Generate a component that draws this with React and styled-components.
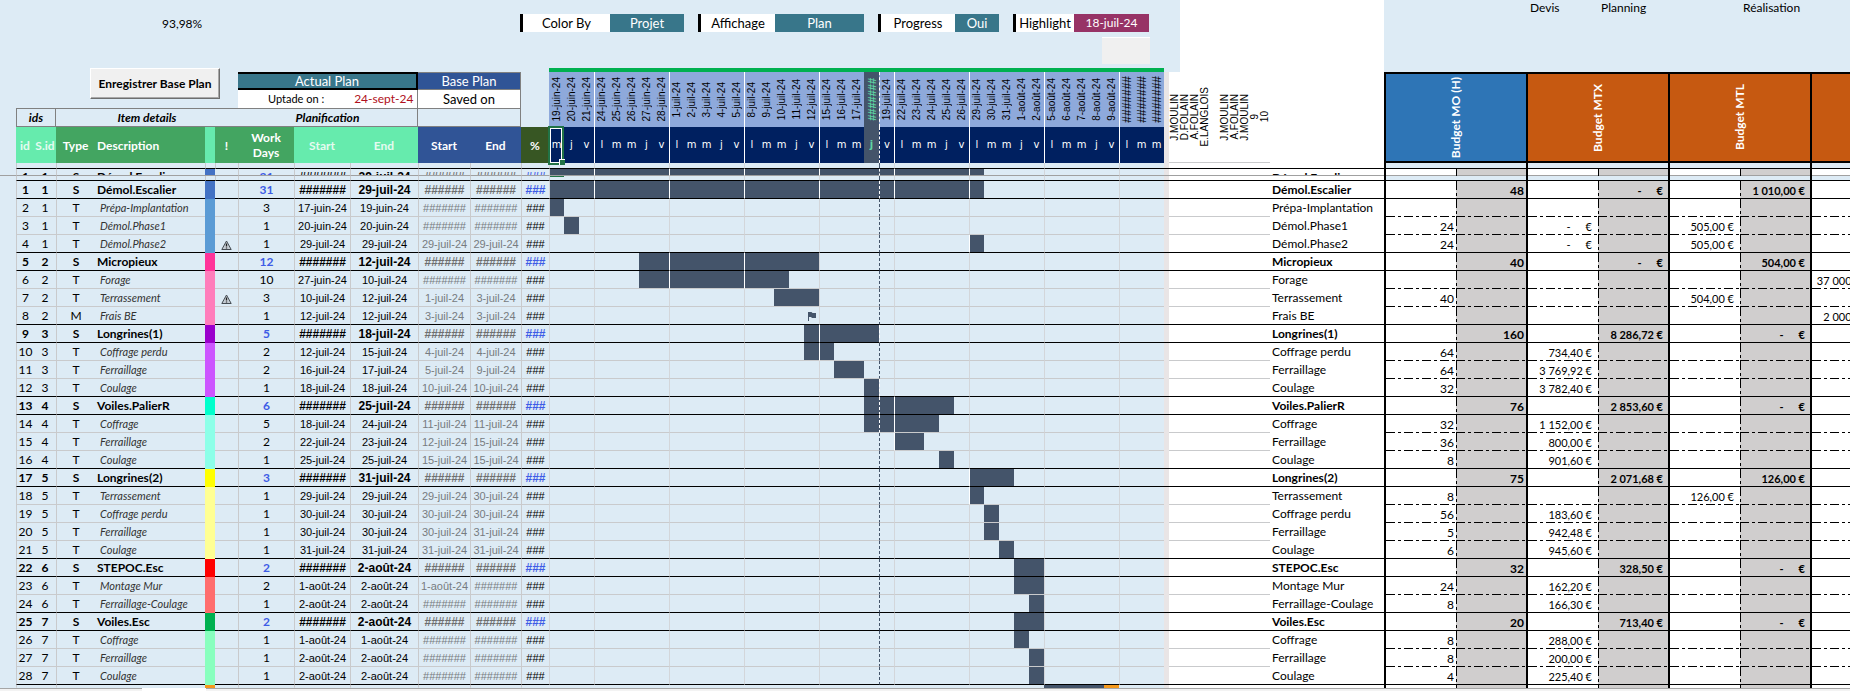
import React from "react";
import styled, { createGlobalStyle, css } from "styled-components";

const c = {
  sheet: "#ddebf5",
  grid: "#c9cacc",
  teal: "#38768a",
  mint: "#66ebad",
  green: "#43a561",
  blue: "#305496",
  bar: "#44546a",
  navy: "#002060",
  date: "#8ea9db",
  grey: "#d0cece",
  accent: "#3d5ce6",
  orange: "#f5991c",
};

const GlobalStyle = createGlobalStyle`
  * { box-sizing: border-box; }
  body {
    margin: 0;
    background: #fff;
    color: #000;
    font: 12px/16px Lato, "Liberation Sans", sans-serif;
    overflow-x: hidden;
  }
`;

const Page = styled.main`
  overflow: hidden;
`;

/* ---------- top band ---------- */
const TopBand = styled.header`
  display: flex;
  height: 68px;
`;
const ControlPane = styled.div`
  flex: none;
  width: 1180px;
  padding-top: 14px;
  background: ${c.sheet};
`;
const BlankPane = styled.div`
  flex: none;
  width: 204px;
`;
const PhasePane = styled.div`
  flex: 1;
  display: flex;
  padding-left: 146px;
  background: ${c.sheet};
  font-size: 12px;
  line-height: 15px;
  white-space: nowrap;
`;
const Phase = styled.span`
  flex: none;
  width: ${(p) => p.$w}px;
`;
const Controls = styled.div`
  display: flex;
  gap: 14px;
  height: 18px;
`;
const Ratio = styled.output`
  flex: none;
  width: 506px;
  padding-left: 162px;
  line-height: 20px;
`;
const Field = styled.label`
  display: flex;
  flex: none;
  border-left: 3px solid #000;
`;
const FieldName = styled.span`
  width: ${(p) => p.$w}px;
  background: #fff;
  text-align: center;
  line-height: 19px;
  font-size: 13px;
`;
const fieldValue = css`
  width: ${(p) => p.$w}px;
  height: 18px;
  margin: 0;
  padding: 0;
  border: 0;
  border-radius: 0;
  color: #fff;
  font: 13px/18px Lato, "Liberation Sans", sans-serif;
  text-align: center;
  text-align-last: center;
`;
const FieldSelect = styled.select`
  ${fieldValue}
  appearance: none;
  background: ${c.teal};
`;
const FieldInput = styled.input`
  ${fieldValue}
  background: #973366;
  font-size: 12px;
`;
const BlankButton = styled.button`
  display: block;
  width: 48px;
  height: 27px;
  margin: 5px 30px 0 auto;
  padding: 0;
  border: 0;
  border-top: 1px solid #fff;
  background: #f0f0f0;
`;

/* ---------- sheet ---------- */
const Sheet = styled.table`
  width: 100%;
  table-layout: fixed;
  border-collapse: separate;
  border-spacing: 0;
  td, th {
    padding: 0;
    white-space: nowrap;
  }
`;
const Row = styled.tr`
  height: ${(p) => p.$h}px;
`;
const Blank = styled.td`
  background: ${(p) => p.$bg || c.sheet};
`;
const GreenLine = styled.td`
  background: #00b050;
`;
const ButtonCell = styled.td`
  background: ${c.sheet};
  padding-left: 74px !important;
  vertical-align: top;
`;
const SaveButton = styled.button`
  display: block;
  width: 130px;
  height: 31px;
  padding: 0;
  border: 1px solid;
  border-color: #fff #6e6e6e #6e6e6e #fff;
  box-shadow: inset -1px -1px 0 #a8a8a8;
  background: #f0f0f0;
  color: #000;
  font: bold 12px/16px Lato, "Liberation Sans", sans-serif;
`;
const PlanTitle = styled.th`
  background: ${(p) => p.$bg};
  border: ${(p) => (p.$heavy ? "2px solid #000" : "1px solid #808080")};
  border-left: 0;
  color: #fff;
  font-weight: 400;
  line-height: 14px;
  font-size: 13px;
`;
const PlanInfo = styled.td`
  background: #fff;
  border-right: 1px solid #808080;
  text-align: center;
  font-size: 13px;
`;
const Update = styled.div`
  display: flex;
  align-items: center;
  padding-left: 30px;
  gap: 30px;
  font-size: 11px;
`;
const UpdateDate = styled.span`
  color: #b01020;
  font-size: 12px;
`;
const SectionTitle = styled.th`
  background: ${c.sheet};
  border: solid #808080;
  border-width: 1px 1px 1px ${(p) => (p.$first ? 1 : 0)}px;
  ${(p) => p.$open && "border-right-width: 0;"}
  font: italic bold 12px/16px Lato, "Liberation Sans", sans-serif;
`;
const ColumnHead = styled.th`
  background: ${(p) => p.$bg};
  color: ${(p) => p.$color || "#fff"};
  text-align: ${(p) => (p.$left ? "left" : "center")};
  padding-left: ${(p) => (p.$left ? 2 : 0)}px !important;
  font: bold 12px/15px Lato, "Liberation Sans", sans-serif;
  white-space: normal !important;
`;
const weekEdge = css`
  border-left: 1px solid ${(p) => (p.$onBar ? "#fff" : "#d3d6da")};
`;
const todayEdge = css`
  border-left: 1px dashed ${(p) => (p.$onBar ? "#fff" : c.bar)};
`;
const DateHead = styled.th`
  background: ${(p) => (p.$today ? c.bar : c.date)};
  color: ${(p) => (p.$today ? "#5fd6a4" : "#000")};
  ${(p) => p.$edge === "week" && weekEdge}
  ${(p) => p.$edge === "today" && todayEdge}
`;
const Upright = styled.span`
  display: block;
  margin: 0 auto;
  writing-mode: vertical-rl;
  transform: rotate(180deg);
  text-align: center;
  font: ${(p) => p.$font || '10px/10px "Liberation Sans", sans-serif'};
`;
const WeekdayHead = styled.th`
  position: relative;
  background: ${(p) => (p.$today ? c.bar : c.navy)};
  color: ${(p) => (p.$today ? "#5fd6a4" : "#fff")};
  ${(p) => p.$edge === "week" && weekEdge}
  ${(p) => p.$edge === "today" && todayEdge}
  font: ${(p) => (p.$today ? "bold " : "")}10px/12px "DejaVu Sans", sans-serif;
`;
const Selection = styled.span`
  position: absolute;
  z-index: 1;
  inset: -1px 0 -2px -1px;
  border: 2px solid #217346;
  box-shadow: inset 0 0 0 1px #fff;
  &::after {
    content: "";
    position: absolute;
    right: -3px;
    bottom: -2px;
    width: 5px;
    height: 5px;
    background: #217346;
    border: solid #fff;
    border-width: 1px 0 0 1px;
  }
`;
const SelectionEdge = styled.span`
  position: absolute;
  top: 0;
  left: 0;
  width: 17px;
  height: 1px;
  background: #217346;
`;
const ResourceHead = styled.th`
  background: #fff;
  border-bottom: 1px solid ${c.grid};
`;
const BudgetHead = styled.th`
  background: ${(p) => p.$bg};
  border: 2px solid #000;
  border-right: 0;
  color: #fff;
`;

const lineColor = (p) =>
  ({ black: "#000", freeze: "#a0a0a0", none: "transparent" })[p.$line] || c.grid;
const Cell = styled.td`
  background: ${(p) => p.$bg || c.sheet};
  border-bottom: 1px solid ${(p) => (p.$solid ? p.$bg : lineColor(p))};
  border-left: ${(p) => (p.$edge ? `1px solid ${c.grid}` : 0)};
  color: ${(p) => p.$color || "#000"};
  text-align: ${(p) => (p.$left ? "left" : "center")};
  ${(p) => p.$left && `padding-left: ${p.$left}px !important;`}
  font-family: Lato, "Liberation Sans", sans-serif;
  font-size: ${(p) => p.$size || 12}px;
  font-weight: ${(p) => (p.$bold ? 700 : 400)};
  font-style: ${(p) => (p.$italic ? "italic" : "normal")};
  line-height: 16px;
`;
const DateCell = styled(Cell)`
  font-family: "Liberation Sans", sans-serif;
`;
const DayCell = styled.td`
  position: relative;
  background: ${(p) => p.$fill || c.sheet};
  border-bottom: 1px solid ${lineColor};
  ${(p) => p.$edge === "week" && weekEdge}
  ${(p) => p.$edge === "today" && todayEdge}
`;
const Strip = styled.td`
  background: #e9e5e6;
  border-bottom: 1px solid ${(p) => (p.$line ? lineColor(p) : "#e9e5e6")};
`;
const ResourceCell = styled.td`
  background: #fff;
  border-bottom: 1px solid ${lineColor};
`;
const NameCell = styled.td`
  background: #fff;
  padding: 1px 0 0 2px !important;
  border-bottom: 1px solid ${(p) => (p.$line === "grey" ? "#fff" : lineColor(p))};
  font-weight: ${(p) => (p.$bold ? 700 : 400)};
  font-size: 12px;
  line-height: 16px;
`;
const dashDot = (dir) =>
  `repeating-linear-gradient(${dir}, #000 0 9px, transparent 9px 12px, #000 12px 15px, transparent 15px 18px)`;
const BudgetCell = styled.td`
  text-align: right;
  padding: 1px ${(p) => (p.$hours ? 2 : p.$planned ? 5 : 6)}px 0 0 !important;
  font-weight: ${(p) => (p.$bold ? 700 : 400)};
  font-size: ${(p) => (p.$hours ? 12 : 11)}px;
  line-height: 16px;
  background-color: ${(p) => (p.$plain ? c.sheet : p.$planned ? c.grey : "#fff")};
  border-left: ${(p) => (p.$planned ? 0 : "2px solid #000")};
  background-image: ${(p) =>
    [
      p.$planned && !p.$plain ? dashDot("to bottom") : "linear-gradient(transparent, transparent)",
      p.$line === "grey" ? dashDot("to right") : `linear-gradient(${lineColor(p)}, ${lineColor(p)})`,
    ].join(", ")};
  background-size: 1px 100%, 100% 1px;
  background-position: left top, left bottom;
  background-repeat: no-repeat;
`;
const Zero = styled.span`
  padding-right: 15px;
`;
const Clip = styled.div`
  height: ${(p) => p.$h}px;
  overflow: hidden;
`;

/* ---------- foot ---------- */
const SheetTabs = styled.footer`
  display: flex;
  height: 3px;
  border-top: 1px solid #a6a6a6;
  background: #f3f3f3;
`;
const ActiveTab = styled.span`
  width: 64px;
  margin-left: 142px;
  margin-top: -1px;
  background: #fff;
`;

/* ---------- data ---------- */
const HASH = "#######";
const days = [
  "19-juin-24", "20-juin-24", "21-juin-24",
  "24-juin-24", "25-juin-24", "26-juin-24", "27-juin-24", "28-juin-24",
  "1-juil-24", "2-juil-24", "3-juil-24", "4-juil-24", "5-juil-24",
  "8-juil-24", "9-juil-24", "10-juil-24", "11-juil-24", "12-juil-24",
  "15-juil-24", "16-juil-24", "17-juil-24", HASH, "19-juil-24",
  "22-juil-24", "23-juil-24", "24-juil-24", "25-juil-24", "26-juil-24",
  "29-juil-24", "30-juil-24", "31-juil-24", "1-août-24", "2-août-24",
  "5-août-24", "6-août-24", "7-août-24", "8-août-24", "9-août-24",
  HASH, HASH, HASH,
];
const TODAY = 21;
const weekday = (i) => "lmmjv"[(i + 2) % 5];
const edgeOf = (i) => (i === TODAY + 1 ? "today" : i === 0 || (i + 2) % 5 === 0 ? "week" : null);

const resources = ["J.MOULIN", "D.FOLAIN", "A.FOLAIN", "E.LANGLOIS", "", "J.MOULIN", "A.FOLAIN", "J.MOULIN", "9", "10"];

const groups = {
  1: ["#4472c4", "#5b9bd5"],
  2: ["#ff3399", "#ff7dbb"],
  3: ["#9a00cc", "#cc55ff"],
  4: ["#00ffcc", "#8cffe8"],
  5: ["#ffff00", "#ffff93"],
  6: ["#ff0000", "#ff6d6d"],
  7: ["#00b050", "#88ffbe"],
};
const Z = "-";
// id, group, type, name, work days, start, end, base start, base end, bar from, bar to, MO, MTX, MTL, next, warning
const tasks = [
  [1, 1, "S", "Démol.Escalier", 31, HASH, "29-juil-24", "######", "######", 0, 28, "48", Z, "1 010,00 €"],
  [2, 1, "T", "Prépa-Implantation", 3, "17-juin-24", "19-juin-24", HASH, HASH, 0, 0],
  [3, 1, "T", "Démol.Phase1", 1, "20-juin-24", "20-juin-24", HASH, HASH, 1, 1, "24", Z, "505,00 €"],
  [4, 1, "T", "Démol.Phase2", 1, "29-juil-24", "29-juil-24", "29-juil-24", "29-juil-24", 28, 28, "24", Z, "505,00 €", "", true],
  [5, 2, "S", "Micropieux", 12, HASH, "12-juil-24", "######", "######", 6, 17, "40", Z, "504,00 €"],
  [6, 2, "T", "Forage", 10, "27-juin-24", "10-juil-24", HASH, HASH, 6, 15, "", "", "", "37 000,00 €"],
  [7, 2, "T", "Terrassement", 3, "10-juil-24", "12-juil-24", "1-juil-24", "3-juil-24", 15, 17, "40", "", "504,00 €", "", true],
  [8, 2, "M", "Frais BE", 1, "12-juil-24", "12-juil-24", "3-juil-24", "3-juil-24", 17, 17, "", "", "", "2 000,00 €"],
  [9, 3, "S", "Longrines(1)", 5, HASH, "18-juil-24", "######", "######", 17, 21, "160", "8 286,72 €", Z],
  [10, 3, "T", "Coffrage perdu", 2, "12-juil-24", "15-juil-24", "4-juil-24", "4-juil-24", 17, 18, "64", "734,40 €"],
  [11, 3, "T", "Ferraillage", 2, "16-juil-24", "17-juil-24", "5-juil-24", "9-juil-24", 19, 20, "64", "3 769,92 €"],
  [12, 3, "T", "Coulage", 1, "18-juil-24", "18-juil-24", "10-juil-24", "10-juil-24", 21, 21, "32", "3 782,40 €"],
  [13, 4, "S", "Voiles.PalierR", 6, HASH, "25-juil-24", "######", "######", 21, 26, "76", "2 853,60 €", Z],
  [14, 4, "T", "Coffrage", 5, "18-juil-24", "24-juil-24", "11-juil-24", "11-juil-24", 21, 25, "32", "1 152,00 €"],
  [15, 4, "T", "Ferraillage", 2, "22-juil-24", "23-juil-24", "12-juil-24", "15-juil-24", 23, 24, "36", "800,00 €"],
  [16, 4, "T", "Coulage", 1, "25-juil-24", "25-juil-24", "15-juil-24", "15-juil-24", 26, 26, "8", "901,60 €"],
  [17, 5, "S", "Longrines(2)", 3, HASH, "31-juil-24", "######", "######", 28, 30, "75", "2 071,68 €", "126,00 €"],
  [18, 5, "T", "Terrassement", 1, "29-juil-24", "29-juil-24", "29-juil-24", "30-juil-24", 28, 28, "8", "", "126,00 €"],
  [19, 5, "T", "Coffrage perdu", 1, "30-juil-24", "30-juil-24", "30-juil-24", "30-juil-24", 29, 29, "56", "183,60 €"],
  [20, 5, "T", "Ferraillage", 1, "30-juil-24", "30-juil-24", "30-juil-24", "31-juil-24", 29, 29, "5", "942,48 €"],
  [21, 5, "T", "Coulage", 1, "31-juil-24", "31-juil-24", "31-juil-24", "31-juil-24", 30, 30, "6", "945,60 €"],
  [22, 6, "S", "STEPOC.Esc", 2, HASH, "2-août-24", "######", "######", 31, 32, "32", "328,50 €", Z],
  [23, 6, "T", "Montage Mur", 2, "1-août-24", "2-août-24", "1-août-24", HASH, 31, 32, "24", "162,20 €"],
  [24, 6, "T", "Ferraillage-Coulage", 1, "2-août-24", "2-août-24", HASH, HASH, 32, 32, "8", "166,30 €"],
  [25, 7, "S", "Voiles.Esc", 2, HASH, "2-août-24", "######", "######", 31, 32, "20", "713,40 €", Z],
  [26, 7, "T", "Coffrage", 1, "1-août-24", "1-août-24", HASH, HASH, 31, 31, "8", "288,00 €"],
  [27, 7, "T", "Ferraillage", 1, "2-août-24", "2-août-24", HASH, HASH, 32, 32, "8", "200,00 €"],
  [28, 7, "T", "Coulage", 1, "2-août-24", "2-août-24", HASH, HASH, 32, 32, "4", "225,40 €"],
].map(([id, group, type, name, work, start, end, bStart, bEnd, from, to, mo = "", mtx = "", mtl = "", next = "", warn = false]) => ({
  id, group, type, name, work, start, end, bStart, bEnd, from, to, budgets: [mo, mtx, mtl, next], warn,
}));

const columns = [
  16, 18, 22, 39, 110, 10, 23, 56, 56, 68, 52, 51, 28,
  ...days.map(() => 15),
  5, 11, 10, 10, 10, 10, 10, 10, 10, 10, 10,
  114,
  72, 70, 72, 70, 72, 70, 72, 70,
];

/* ---------- icons ---------- */
const WarningSvg = styled.svg`
  display: block;
  margin: 3px auto 0;
`;
const WarningIcon = () => (
  <WarningSvg width="11" height="11" viewBox="0 0 11 11" role="img" aria-label="Warning">
    <path d="M5.5 1 L10.2 9.5 H0.8 Z" fill="#c5ccd3" stroke="#444b52" />
    <path d="M5.5 3.5 V6.5 M5.5 7.5 V8.5" stroke="#222" strokeWidth="1.3" />
  </WarningSvg>
);
const FlagSvg = styled.svg`
  display: block;
  margin: 0 auto;
`;
const FlagIcon = () => (
  <FlagSvg width="9" height="10" viewBox="0 0 9 10" role="img" aria-label="Milestone">
    <path d="M1.5 1 V10" stroke="#44546a" />
    <path d="M2 1 H4.5 L5.5 2 H9 V7 H5 L4 6 H2 Z" fill="#44546a" />
  </FlagSvg>
);

/* ---------- rows ---------- */
const budgetBlocks = [0, 1, 2, 3];

function TaskRow({ t, line, frozen }) {
  const s = t.type === "S";
  const wrap = (x, h = 6) => (frozen ? <Clip $h={h}>{x}</Clip> : x);
  const money = (v) => (v === Z ? <><Zero>-</Zero>€</> : v);
  const inBar = (i) => t.type !== "M" && i >= t.from && i <= t.to;
  const faint = s ? "#6f6f6f" : "#777b80";
  return (
    <Row $h={frozen ? 7 : 18}>
      <Cell $bg={c.sheet} $solid={!frozen} $line={line} />
      <Cell $line={line} $edge $bold={s}>{wrap(t.id)}</Cell>
      <Cell $line={line} $bold={s}>{wrap(t.group)}</Cell>
      <Cell $line={line} $edge $bold={s}>{wrap(t.type)}</Cell>
      <Cell $line={line} $left={s ? 2 : 5} $bold={s} $italic={!s} $size={s ? 12 : 11} $color={s ? "#000" : "#333"}>{wrap(t.name)}</Cell>
      <Cell $line={line} $solid={!frozen} $bg={groups[t.group][s ? 0 : 1]} />
      <Cell $line={line}>{t.warn && <WarningIcon />}</Cell>
      <Cell $line={line} $edge $bold={s} $color={s ? c.accent : "#000"}>{wrap(t.work)}</Cell>
      <DateCell $line={line} $edge $bold={s} $size={s ? 12 : 11}>{wrap(t.start)}</DateCell>
      <DateCell $line={line} $edge $bold={s} $size={s ? 12 : 11}>{wrap(t.end)}</DateCell>
      <DateCell $line={line} $edge $bold={s} $size={s ? 12 : 11} $color={faint}>{wrap(t.bStart)}</DateCell>
      <DateCell $line={line} $edge $bold={s} $size={s ? 12 : 11} $color={faint}>{wrap(t.bEnd)}</DateCell>
      <DateCell $line={line} $edge $bold={s} $size={s ? 12 : 11} $color={s ? c.accent : "#000"}>{wrap("###")}</DateCell>
      {days.map((_, i) => {
        const edge = edgeOf(i);
        const onBar = edge === "today" ? inBar(i - 1) : inBar(i) && i > 0;
        return (
          <DayCell key={i} $line={line} $edge={edge} $onBar={onBar} $fill={inBar(i) ? c.bar : null}>
            {t.type === "M" && i === t.from && <FlagIcon />}
          </DayCell>
        );
      })}
      <Strip $line={line === "grey" ? null : line} />
      <ResourceCell colSpan={10} $line={line} />
      <NameCell $line={line} $bold={s}>{wrap(t.name, 5)}</NameCell>
      {budgetBlocks.map((b) => (
        <React.Fragment key={b}>
          <BudgetCell $line={line} $hours={b === 0}>{!s && money(t.budgets[b])}</BudgetCell>
          <BudgetCell $line={line} $hours={b === 0} $planned $bold>{s && !frozen && money(t.budgets[b])}</BudgetCell>
        </React.Fragment>
      ))}
      <BudgetCell $line={line} />
    </Row>
  );
}

function SpacerRow({ h, selected }) {
  return (
    <Row $h={h}>
      <Cell $solid $bg={c.sheet} />
      {[1, 0, 1, 0, 1, 1, 1, 1, 1, 1, 1, 1].map((e, i) => <Cell key={i} $line="black" $edge={!!e} />)}
      {days.map((_, i) => (
        <DayCell key={i} $line="black" $edge={edgeOf(i)}>{selected && i === 0 && <SelectionEdge />}</DayCell>
      ))}
      <Strip $line="black" />
      <ResourceCell colSpan={10} $line="black" />
      <NameCell $line="black" />
      {budgetBlocks.map((b) => (
        <React.Fragment key={b}>
          <BudgetCell $line="black" $plain />
          <BudgetCell $line="black" $plain $planned />
        </React.Fragment>
      ))}
      <BudgetCell $line="black" $plain />
    </Row>
  );
}

/* Upper edge of the row that the sheet tabs cover. */
function PartialRow() {
  return (
    <Row $h={3}>
      <Blank />
      {[1, 0, 1, 0].map((e, i) => <Cell key={i} $solid $bg={c.sheet} $edge={!!e} />)}
      <Blank $bg={c.orange} />
      {[0, 1, 1, 1, 1, 1, 1].map((e, i) => <Cell key={i} $solid $bg={c.sheet} $edge={!!e} />)}
      {days.map((_, i) => <Blank key={i} $bg={i >= 33 && i <= 36 ? c.bar : i === 37 ? c.orange : null} />)}
      <Strip />
      <Blank colSpan={11} $bg="#fff" />
      {budgetBlocks.map((b) => (
        <React.Fragment key={b}>
          <BudgetCell $line="none" />
          <BudgetCell $line="none" $planned />
        </React.Fragment>
      ))}
      <BudgetCell $line="none" />
    </Row>
  );
}

const fields = [
  { name: "Color By", w: 87, value: "Projet", vw: 74 },
  { name: "Affichage", w: 74, value: "Plan", vw: 89 },
  { name: "Progress", w: 74, value: "Oui", vw: 44 },
];

const budgetFont = 'bold 12px/16px Lato, "Liberation Sans", sans-serif';
const dateFont = (d, today) =>
  d !== HASH ? undefined : `${today ? "bold 11px" : "12px"}/12px "Liberation Sans", sans-serif`;

export default function App() {
  return (
    <>
      <GlobalStyle />
      <Page>
        <TopBand>
          <ControlPane>
            <Controls>
              <Ratio>93,98%</Ratio>
              {fields.map((f) => (
                <Field key={f.name}>
                  <FieldName $w={f.w}>{f.name}</FieldName>
                  <FieldSelect $w={f.vw} defaultValue={f.value}>
                    <option>{f.value}</option>
                  </FieldSelect>
                </Field>
              ))}
              <Field>
                <FieldName $w={58}>Highlight</FieldName>
                <FieldInput $w={75} defaultValue="18-juil-24" />
              </Field>
            </Controls>
            <BlankButton aria-label="Action" />
          </ControlPane>
          <BlankPane />
          <PhasePane>
            <Phase $w={71}>Devis</Phase>
            <Phase $w={142}>Planning</Phase>
            <Phase $w={80}>Réalisation</Phase>
          </PhasePane>
        </TopBand>

        <Sheet>
          <colgroup>
            {columns.map((w, i) => <col key={i} width={w} />)}
            <col />
          </colgroup>
          <thead>
            <Row $h={4}>
              <Blank rowSpan={5} />
              <ButtonCell colSpan={6} rowSpan={3}>
                <SaveButton>Enregistrer Base Plan</SaveButton>
              </ButtonCell>
              <Blank colSpan={6} />
              <GreenLine colSpan={41} />
              <Blank colSpan={2} />
              <Blank colSpan={10} $bg="#fff" />
              <Blank colSpan={9} />
            </Row>
            <Row $h={18}>
              <PlanTitle colSpan={3} $bg={c.teal} $heavy>Actual Plan</PlanTitle>
              <PlanTitle colSpan={2} $bg={c.blue}>Base Plan</PlanTitle>
              <Blank rowSpan={3} />
              {days.map((d, i) => (
                <DateHead key={i} rowSpan={3} $today={i === TODAY} $edge={i ? edgeOf(i) : null} $onBar>
                  <Upright $font={dateFont(d, i === TODAY)}>{d}</Upright>
                </DateHead>
              ))}
              <Strip rowSpan={4} />
              {resources.map((r, i) => (
                <ResourceHead key={i} rowSpan={4}><Upright>{r}</Upright></ResourceHead>
              ))}
              <Blank rowSpan={4} $bg="#fff" />
              <BudgetHead colSpan={2} rowSpan={4} $bg="#2e75b6"><Upright $font={budgetFont}>Budget MO (H)</Upright></BudgetHead>
              <BudgetHead colSpan={2} rowSpan={4} $bg="#c65911"><Upright $font={budgetFont}>Budget MTX</Upright></BudgetHead>
              <BudgetHead colSpan={2} rowSpan={4} $bg="#c65911"><Upright $font={budgetFont}>Budget MTL</Upright></BudgetHead>
              <BudgetHead colSpan={2} rowSpan={4} $bg="#c65911" />
              <BudgetHead rowSpan={4} $bg="#c65911" />
            </Row>
            <Row $h={18}>
              <PlanInfo colSpan={3}>
                <Update>Uptade on : <UpdateDate>24-sept-24</UpdateDate></Update>
              </PlanInfo>
              <PlanInfo colSpan={2}>Saved on</PlanInfo>
            </Row>
            <Row $h={19}>
              <SectionTitle colSpan={2} $first>ids</SectionTitle>
              <SectionTitle colSpan={4} $open>Item details</SectionTitle>
              <SectionTitle colSpan={3}>Planification</SectionTitle>
              <SectionTitle colSpan={2} />
            </Row>
            <Row $h={36}>
              <ColumnHead $bg={c.mint} $color="#e4fbf0">id</ColumnHead>
              <ColumnHead $bg={c.mint} $color="#e4fbf0">S.id</ColumnHead>
              <ColumnHead $bg={c.green}>Type</ColumnHead>
              <ColumnHead $bg={c.green} $left>Description</ColumnHead>
              <ColumnHead $bg={c.mint} />
              <ColumnHead $bg={c.green}>!</ColumnHead>
              <ColumnHead $bg={c.green}>Work Days</ColumnHead>
              <ColumnHead $bg={c.mint} $color="#e4fbf0">Start</ColumnHead>
              <ColumnHead $bg={c.mint} $color="#e4fbf0">End</ColumnHead>
              <ColumnHead $bg={c.blue}>Start</ColumnHead>
              <ColumnHead $bg={c.blue}>End</ColumnHead>
              <ColumnHead $bg="#375623">%</ColumnHead>
              {days.map((_, i) => (
                <WeekdayHead key={i} $today={i === TODAY} $edge={i ? edgeOf(i) : null} $onBar>
                  {weekday(i)}
                  {i === 0 && <Selection />}
                </WeekdayHead>
              ))}
            </Row>
          </thead>
          <tbody>
            <SpacerRow h={6} />
            <TaskRow t={tasks[0]} line="freeze" frozen />
            <SpacerRow h={5} selected />
            {tasks.map((t, i) => {
              const next = tasks[i + 1];
              const black = t.type === "S" || !next || next.type === "S";
              return <TaskRow key={t.id} t={t} line={black ? "black" : "grey"} />;
            })}
            <PartialRow />
          </tbody>
        </Sheet>
        <SheetTabs>
          <ActiveTab />
        </SheetTabs>
      </Page>
    </>
  );
}
